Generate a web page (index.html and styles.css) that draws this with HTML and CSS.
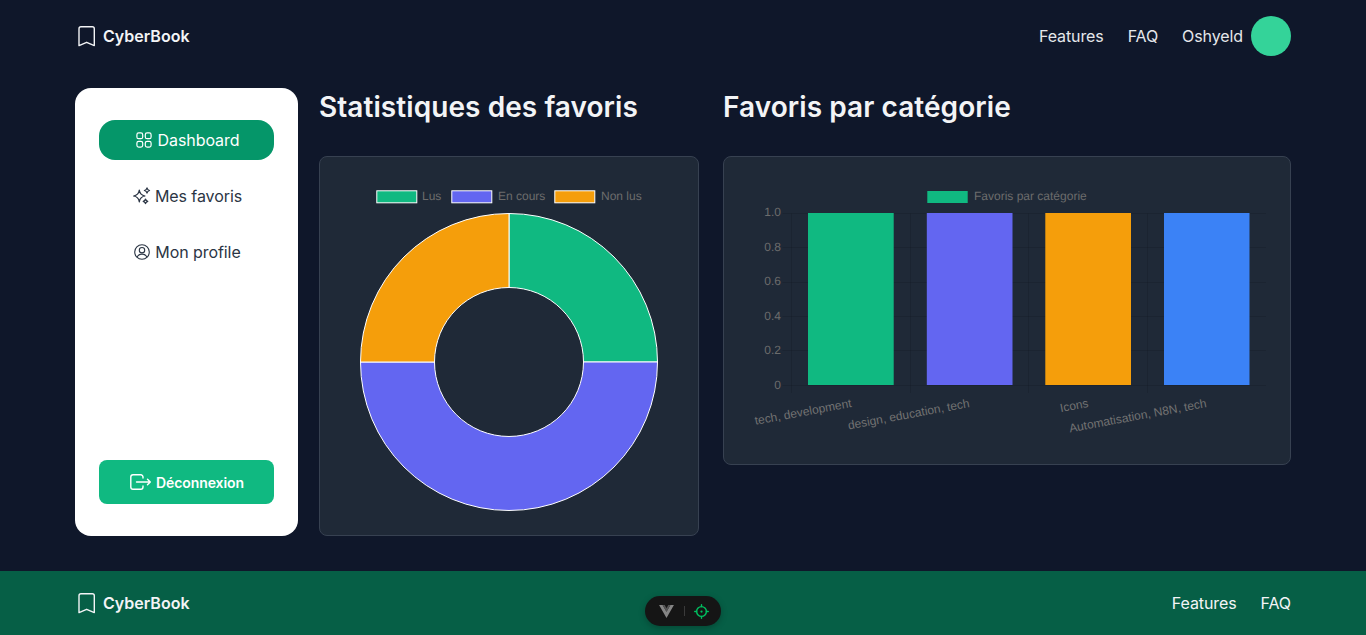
FILE: index.html
```html
<!DOCTYPE html>
<html lang="fr">
<head>
<meta charset="utf-8">
<title>CyberBook</title>
<link rel="stylesheet" href="styles.css">
</head>
<body>
<header class="bar top">
  <a class="brand"><svg class="bm" viewBox="0 0 18 22" fill="none" stroke="currentColor" stroke-width="1.4" stroke-linejoin="round"><path d="M3 1.800h11.300c1.100 0 2 .8 2 1.900v16.900l-7.650-3.300L1 20.600V3.700c0-1.100.9-1.900 2-1.900z"/></svg><span>CyberBook</span></a>
  <nav class="nav">
    <a>Features</a><a>FAQ</a>
    <div class="user"><span>Oshyeld</span><i class="avatar"></i></div>
  </nav>
</header>
<main class="main">
  <aside class="side">
    <div class="menu">
      <a class="item active"><svg class="i-grid" viewBox="0 0 16 16" fill="none" stroke="currentColor" stroke-width="1.200"><rect x=".9" y=".9" width="5.800" height="5.800" rx="1.800"/><rect x="9.300" y=".9" width="5.800" height="5.800" rx="1.800"/><rect x=".9" y="9.300" width="5.800" height="5.800" rx="1.800"/><rect x="9.300" y="9.300" width="5.800" height="5.800" rx="1.800"/></svg>Dashboard</a>
      <a class="item"><svg class="i-spark" viewBox="0 0 18 18" fill="none" stroke="currentColor" stroke-width="1.200" stroke-linejoin="round"><path d="M6.300 3.200C6.800 6.500 8.600 8.500 12 9c-3.400.5-5.200 2.500-5.700 5.800C5.800 11.500 4 9.500.6 9c3.400-.5 5.200-2.500 5.700-5.800z"/><path d="M14 .9c.3 1.500 1.100 2.300 2.600 2.600-1.500.3-2.300 1.100-2.600 2.600-.3-1.500-1.100-2.300-2.600-2.600C12.900 3.200 13.700 2.400 14 .9z"/><path d="M12.500 12c.3 1.300 1 2 2.300 2.300-1.300.3-2 1-2.300 2.300-.3-1.300-1-2-2.300-2.300 1.300-.3 2-1 2.300-2.300z"/></svg>Mes favoris</a>
      <a class="item"><svg class="i-user" viewBox="0 0 16 16" fill="none" stroke="currentColor" stroke-width="1.100"><circle cx="8" cy="8" r="7.300"/><circle cx="8" cy="6.200" r="2.700"/><path d="M3 13.200c.9-2 2.700-3.100 5-3.100s4.100 1.100 5 3.100"/></svg>Mon profile</a>
    </div>
    <a class="logout"><svg viewBox="0 0 21 16" fill="none" stroke="currentColor" stroke-width="1.400" stroke-linecap="round" stroke-linejoin="round"><path d="M13 4V3A2.200 2.200 0 0 0 10.800.8H3A2.200 2.200 0 0 0 .8 3v10A2.200 2.200 0 0 0 3 15.200h7.800A2.200 2.200 0 0 0 13 13v-1"/><path d="M6.500 8h13.800M17.500 5.200L20.300 8l-2.800 2.800"/></svg>Déconnexion</a>
  </aside>
  <section class="col stats">
    <h2>Statistiques des favoris</h2>
    <div class="card">
      <svg class="chart" viewBox="0 0 378 378" width="378" height="378">
        <g class="legend">
          <rect x="56.800" y="33.800" width="40" height="12" fill="#10b981" stroke="#fff"/><text x="102" y="42.800">Lus</text>
          <rect x="131.800" y="33.800" width="40" height="12" fill="#6366f1" stroke="#fff"/><text x="178" y="42.800">En cours</text>
          <rect x="234.800" y="33.800" width="40" height="12" fill="#f59e0b" stroke="#fff"/><text x="281" y="42.800">Non lus</text>
        </g>
        <g stroke="#fff" stroke-width="1" stroke-linejoin="round">
          <path fill="#10b981" d="M189 56.500A148.500 148.500 0 0 1 337.500 205H263.500A74.500 74.500 0 0 0 189 130.500Z"/>
          <path fill="#6366f1" d="M337.500 205A148.500 148.500 0 0 1 40.500 205H114.500A74.500 74.500 0 0 0 263.500 205Z"/>
          <path fill="#f59e0b" d="M40.500 205A148.500 148.500 0 0 1 189 56.500V130.500A74.500 74.500 0 0 0 114.500 205Z"/>
        </g>
      </svg>
    </div>
  </section>
  <section class="col cats">
    <h2>Favoris par catégorie</h2>
    <div class="card">
      <svg class="chart" viewBox="0 0 566 307" width="566" height="307">
        <g class="legend">
          <rect x="203.300" y="34" width="40.400" height="12" fill="#10b981"/><text x="250" y="42.800">Favoris par catégorie</text>
        </g>
        <g class="grid">
          <path d="M58.500 56.500H542M58.500 90.500H542M58.500 125.500H542M58.500 159.500H542M58.500 193.500H542M58.500 228.500H542"/>
          <path d="M67.500 56.500V236M186.500 56.500V236M304.500 56.500V236M423.500 56.500V236"/>
        </g>
        <g>
          <rect x="84" y="56" width="85.700" height="172" fill="#10b981"/>
          <rect x="202.800" y="56" width="85.700" height="172" fill="#6366f1"/>
          <rect x="321.300" y="56" width="85.700" height="172" fill="#f59e0b"/>
          <rect x="440" y="56" width="85.500" height="172" fill="#3b82f6"/>
        </g>
        <g class="ticks">
          <text x="57" y="59">1.0</text><text x="57" y="94">0.8</text><text x="57" y="128">0.6</text><text x="57" y="163">0.4</text><text x="57" y="197">0.2</text><text x="57" y="232">0</text>
        </g>
        <g class="xlabels">
          <text transform="translate(128 250) rotate(-10.500)">tech, development</text>
          <text transform="translate(246 250) rotate(-10.500)">design, education, tech</text>
          <text transform="translate(365 250) rotate(-10.500)">Icons</text>
          <text transform="translate(483 250) rotate(-10.500)">Automatisation, N8N, tech</text>
        </g>
      </svg>
    </div>
  </section>
</main>
<footer class="bar bottom">
  <a class="brand"><svg class="bm" viewBox="0 0 18 22" fill="none" stroke="currentColor" stroke-width="1.4" stroke-linejoin="round"><path d="M3 1.800h11.300c1.100 0 2 .8 2 1.900v16.900l-7.650-3.300L1 20.600V3.700c0-1.100.9-1.900 2-1.900z"/></svg><span>CyberBook</span></a>
  <nav class="nav"><a>Features</a><a>FAQ</a></nav>
</footer>
<div class="devtools">
  <svg class="vue" viewBox="0 0 16 14"><path fill="#858585" d="M0 0h3.800L8 7.300 12.200 0H16L8 14z"/><path fill="#555" d="M3.800 0h2.300L8 3.400 9.900 0h2.300L8 7.300z"/></svg>
  <i class="sep"></i>
  <svg class="target" viewBox="0 0 16 16" fill="none" stroke="#00c060" stroke-width="1.500" stroke-linecap="round"><circle cx="8" cy="8" r="5.200"/><circle cx="8" cy="8" r="1.200" fill="#00c060" stroke="none"/><path d="M8 .8v2M8 13.200v2M.8 8h2M13.200 8h2"/></svg>
</div>
</body>
</html>
```
FILE: styles.css
```css
* { box-sizing: border-box; }
html, body { margin: 0; height: 100%; }
body {
  position: relative;
  display: flex;
  flex-direction: column;
  height: 635px;
  overflow: hidden;
  background: #0f172a;
  color: #e5e7eb;
  font-family: Inter, "Liberation Sans", sans-serif;
  font-size: 16px;
}
.bar {
  display: flex;
  align-items: center;
  justify-content: space-between;
  padding: 0 75px;
}
.top { height: 72px; }
.bottom { height: 64px; background: #065f46; color: #f3f4f6; }
.brand {
  display: flex;
  align-items: center;
  gap: 7px;
  margin-left: 3px;
  font-weight: 600;
  color: #f3f4f6;
}
.bm { width: 18px; height: 22px; display: block; }
.nav { display: flex; align-items: center; gap: 24px; letter-spacing: -.1px; }
.user { display: flex; align-items: center; gap: 8px; }
.avatar { display: block; width: 40px; height: 40px; border-radius: 50%; background: #34d399; }
.main {
  flex: 1;
  display: flex;
  align-items: flex-start;
  padding: 16px 75px 0;
}
.side {
  width: 223px;
  height: 448px;
  margin-right: 21px;
  padding: 32px 24px;
  display: flex;
  flex-direction: column;
  justify-content: space-between;
  background: #fff;
  border-radius: 16px;
}
.menu { display: flex; flex-direction: column; gap: 16px; }
.item {
  height: 40px;
  display: flex;
  align-items: center;
  justify-content: center;
  gap: 5px;
  padding-left: 2px;
  color: #2b3544;
  border-radius: 16px;
  letter-spacing: -.08px;
}
.i-grid, .i-user { width: 16px; height: 16px; }
.i-grid { margin-right: 1px; }
.i-spark { width: 18px; height: 18px; margin-right: -1px; }
.item.active { background: #059669; color: #fff; }
.logout {
  height: 44px;
  display: flex;
  align-items: center;
  justify-content: center;
  gap: 5px;
  padding-left: 1px;
  background: #10b981;
  color: #fff;
  border-radius: 8px;
  font-size: 14px;
  font-weight: 600;
  letter-spacing: -.08px;
}
.logout svg { width: 21px; height: 16px; }
.col h2 {
  margin: 0 0 30px;
  font-size: 28px;
  line-height: 38px;
  font-weight: 600;
  letter-spacing: .07px;
  color: #f3f4f6;
}
.stats { width: 380px; margin-right: 24px; }
.cats { width: 568px; }
.card {
  background: #1f2937;
  border: 1px solid #374151;
  border-radius: 8px;
}
.chart { display: block; }
.chart text {
  font-family: "Liberation Sans", Arial, sans-serif;
  font-size: 12px;
  fill: #6c6c6c;
  text-rendering: geometricPrecision;
}
.chart .xlabels text { fill: #727272; text-anchor: end; }
.grid path { stroke: rgba(0,0,0,.1); stroke-width: 1; fill: none; }
.ticks text { text-anchor: end; }
.devtools {
  position: absolute;
  left: 645px;
  top: 596px;
  width: 76px;
  height: 30px;
  display: flex;
  align-items: center;
  justify-content: center;
  background: #151515;
  border-radius: 15px;
  box-shadow: 0 2px 6px rgba(0,0,0,.25);
}
.vue { width: 15px; height: 13px; margin-left: 1px; }
.sep { width: 1px; height: 10px; margin: 0 10px; background: #3a3a3a; }
.target { width: 15px; height: 15px; margin-left: -1px; }
```
